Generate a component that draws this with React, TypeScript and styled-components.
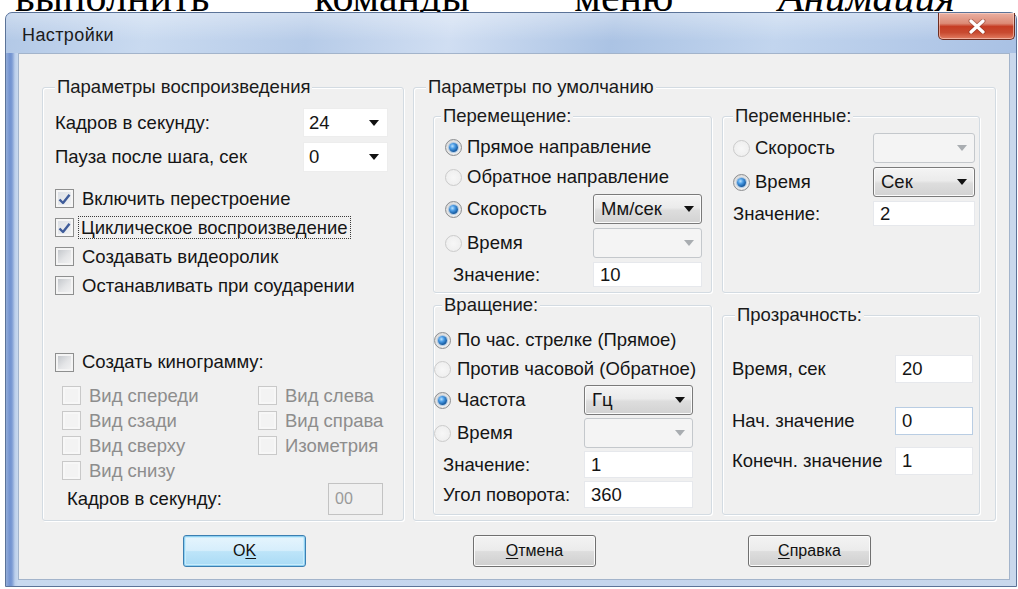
import React from "react";
import styled, { createGlobalStyle, css } from "styled-components";

const GlobalStyle = createGlobalStyle`
  html, body { margin: 0; padding: 0; background: #ffffff; }
  body {
    font-family: "Liberation Sans", Arial, sans-serif;
    font-size: 18.5px;
    line-height: 20px;
    color: #151515;
  }
  * { box-sizing: border-box; }
`;

const Page = styled.div`
  width: 1018px;
  height: 589px;
  overflow: hidden;
  background: #ffffff;
`;

/* clipped line of the document text above the dialog */
const Caption = styled.div`
  height: 12px;
  overflow: hidden;
`;

const CaptionLine = styled.p`
  margin: -25px 0 0;
  padding: 0 63px 0 15px;
  display: flex;
  justify-content: space-between;
  font-family: "Liberation Serif", "Times New Roman", serif;
  font-size: 42px;
  line-height: 44px;
  color: #000;
  em { font-style: italic; }
`;

const Window = styled.div`
  margin: 0 1px 0 5px;
  height: 575px;
  display: flex;
  flex-direction: column;
  border: 1px solid #5b7398;
  border-radius: 7px 7px 0 0;
  background: linear-gradient(90deg, #93acd8 0px, #7192d0 4px, #7d9cd4 6px, #bccfeb 9px, #c8d9ef 12px, #c4d5ed 60%, #c9d8ec 100%);
`;

const TitleBar = styled.div`
  height: 40px;
  display: flex;
  justify-content: space-between;
  align-items: flex-start;
  padding-left: 16px;
  border-radius: 6px 6px 0 0;
  background:
    linear-gradient(180deg, rgba(255, 255, 255, 0.35) 0%, rgba(255, 255, 255, 0) 70%),
    linear-gradient(100deg, #b2c8e6 0%, #c9daf0 14%, #b6cbe8 30%, #d0def2 44%, #abc3e4 60%, #c2d5ee 76%, #a9c1e4 100%);
`;

const Title = styled.span`
  align-self: center;
  padding-top: 4px;
  font-size: 18px;
  letter-spacing: 0.4px;
  color: #1b1b1b;
`;

const CloseButton = styled.div`
  width: 77px;
  height: 27px;
  margin-right: 1px;
  display: grid;
  place-items: center;
  border: 1px solid #6e2d20;
  border-top: none;
  border-radius: 0 0 5px 5px;
  background: linear-gradient(180deg, #eab0a2 0%, #dc8a76 40%, #c63d24 52%, #c84a30 75%, #e27d62 100%);
  box-shadow: inset 0 0 0 1px rgba(255, 220, 210, 0.55);
`;

const Client = styled.div`
  flex: 1;
  margin: 0 6px 6px 12px;
  display: flex;
  flex-direction: column;
  padding: 33px 13px 0 23px;
  background: #f0f0f0;
  border: 1px solid #a3b4cb;
`;

const Groups = styled.div`
  display: grid;
  grid-template-columns: 362px 1fr;
  column-gap: 9px;
  height: 434px;
`;

const GroupBox = styled.div<{ $mt?: number }>`
  display: flex;
  flex-direction: column;
  margin-top: ${(p) => p.$mt ?? 0}px;
  border: 1px solid #d3dbe2;
  border-radius: 3px;
  box-shadow: inset 1px 1px 0 #ffffff, 1px 1px 0 #ffffff;
`;

const GroupTitle = styled.div<{ $ml: number }>`
  align-self: flex-start;
  margin: -11px 0 0 ${(p) => p.$ml}px;
  padding: 0 2px;
  line-height: 20px;
  background: #f0f0f0;
  color: #1a1a1a;
  white-space: nowrap;
`;

/* ---------- left column ---------- */

const PlaybackBody = styled.div`
  display: flex;
  flex-direction: column;
  padding: 0 15px 0 12px;
`;

const FieldRow = styled.div<{ $h: number; $mt?: number; $indent?: number }>`
  display: flex;
  align-items: center;
  justify-content: space-between;
  height: ${(p) => p.$h}px;
  margin-top: ${(p) => p.$mt ?? 0}px;
  padding-left: ${(p) => p.$indent ?? 0}px;
  white-space: nowrap;
`;

const CheckList = styled.div<{ $mt: number }>`
  display: flex;
  flex-direction: column;
  margin-top: ${(p) => p.$mt}px;
`;

const CheckRow = styled.div<{ $h?: number; $disabled?: boolean; $mt?: number }>`
  display: flex;
  align-items: center;
  gap: 8px;
  height: ${(p) => p.$h ?? 29}px;
  margin-top: ${(p) => p.$mt ?? 0}px;
  white-space: nowrap;
  color: ${(p) => (p.$disabled ? "#8d8d8d" : "#151515")};
`;

const FocusText = styled.span`
  padding: 0 2px;
  margin-left: -3px;
  line-height: 21px;
  outline: 1px dotted #3a3a3a;
  outline-offset: 0;
`;

const ViewsGrid = styled.div`
  display: grid;
  grid-template-columns: 196px 1fr;
  grid-auto-rows: 25px;
  margin-top: 7px;
  padding-left: 7px;
`;

const Box = styled.span<{ $checked?: boolean; $disabled?: boolean }>`
  flex: none;
  width: 19px;
  height: 19px;
  display: grid;
  place-items: center;
  border: 1px solid ${(p) => (p.$disabled ? "#c9c9c9" : "#8e8f8f")};
  ${(p) =>
    p.$disabled
      ? css`
          background: #f3f3f3;
          box-shadow: inset 0 0 0 2px #f7f7f7;
        `
      : p.$checked
      ? css`
          background: linear-gradient(135deg, #d9dde3 0%, #f4f5f6 100%);
          box-shadow: inset 0 0 0 2px #f6f6f6;
        `
      : css`
          background: linear-gradient(135deg, #bcc0c5 0%, #e4e5e7 55%, #f5f5f5 100%);
          box-shadow: inset 0 0 0 2px #f4f4f4;
        `}
`;

const RadioDot = styled.span<{ $checked?: boolean; $disabled?: boolean }>`
  flex: none;
  width: 17px;
  height: 17px;
  border-radius: 50%;
  display: grid;
  place-items: center;
  border: 1px solid ${(p) => (p.$disabled ? "#cbcbcb" : "#8c8e90")};
  background: ${(p) =>
    p.$disabled
      ? "radial-gradient(circle at 50% 50%, #f7f7f7 0%, #ececec 100%)"
      : "radial-gradient(circle at 60% 65%, #f6f6f6 0%, #e2e2e2 60%, #cfcfcf 100%)"};
  &::after {
    content: "";
    display: ${(p) => (p.$checked ? "block" : "none")};
    width: 9px;
    height: 9px;
    border-radius: 50%;
    background: radial-gradient(circle at 38% 35%, #b8e2ff 0%, #4a9be4 32%, #155aa0 70%, #0b3d74 100%);
    box-shadow: 0 0 0 1px rgba(120, 170, 220, 0.5);
  }
`;

/* ---------- combo boxes and inputs ---------- */

const Arrow = styled.span<{ $muted?: boolean }>`
  width: 0;
  height: 0;
  border-left: 5px solid transparent;
  border-right: 5px solid transparent;
  border-top: 6px solid ${(p) => (p.$muted ? "#a9adb1" : "#111")};
`;

const EditCombo = styled.div<{ $w: number; $h: number }>`
  width: ${(p) => p.$w}px;
  height: ${(p) => p.$h}px;
  display: flex;
  align-items: center;
  justify-content: space-between;
  padding: 0 8px 0 5px;
  background: #ffffff;
  border: 1px solid #ededed;
`;

const ListCombo = styled.div<{ $disabled?: boolean }>`
  height: 30px;
  display: flex;
  align-items: center;
  justify-content: space-between;
  padding: 0 7px 0 7px;
  border-radius: 3px;
  ${(p) =>
    p.$disabled
      ? css`
          border: 1px solid #c4c8cc;
          background: #f4f4f4;
        `
      : css`
          border: 1px solid #7a7a7a;
          background: linear-gradient(180deg, #f4f4f4 0%, #ebebeb 45%, #dddddd 55%, #d2d2d2 100%);
          box-shadow: inset 0 0 0 1px #fbfbfb;
        `}
`;

const TextBox = styled.div<{ $h?: number; $hover?: boolean }>`
  height: ${(p) => p.$h ?? 25}px;
  display: flex;
  align-items: center;
  padding-left: 6px;
  background: #ffffff;
  border: 1px solid ${(p) => (p.$hover ? "#b9cde3" : "#e6e8ec")};
`;

const DisabledBox = styled.div`
  width: 55px;
  height: 32px;
  margin-right: 5px;
  display: flex;
  align-items: center;
  padding-left: 6px;
  color: #9a9a9a;
  border: 1px solid #c3c3c3;
  background: #f0f0f0;
  font-size: 16px;
`;

/* ---------- right column ---------- */

const DefaultsGrid = styled.div`
  flex: 1;
  display: grid;
  grid-template-columns: 279px 258px;
  grid-template-rows: 177px 1fr;
  column-gap: 10px;
  row-gap: 12px;
  margin-top: 19px;
  padding: 0 0 5px 19px;
`;

const OptionGrid = styled.div<{
  $cols: string;
  $rows: string;
  $gap: number;
  $pad: string;
  $mt: number;
  $align?: string;
}>`
  display: grid;
  grid-template-columns: ${(p) => p.$cols};
  grid-template-rows: ${(p) => p.$rows};
  row-gap: ${(p) => p.$gap}px;
  align-items: ${(p) => p.$align ?? "center"};
  margin-top: ${(p) => p.$mt}px;
  padding: ${(p) => p.$pad};
  white-space: nowrap;
`;

const Option = styled.div<{ $span?: boolean; $gap?: number }>`
  display: flex;
  align-items: center;
  gap: ${(p) => p.$gap ?? 5}px;
  grid-column: ${(p) => (p.$span ? "1 / -1" : "auto")};
`;

const FieldLabel = styled.span<{ $indent?: number }>`
  padding-left: ${(p) => p.$indent ?? 0}px;
  line-height: 28px;
`;

/* ---------- dialog buttons ---------- */

const ButtonRow = styled.div`
  display: grid;
  grid-template-columns: 290px 275px 123px;
  margin-top: 14px;
  padding-left: 141px;
`;

const Button = styled.div<{ $primary?: boolean }>`
  width: 123px;
  height: 32px;
  display: grid;
  place-items: center;
  font-size: 16px;
  color: #111;
  border-radius: 3px;
  ${(p) =>
    p.$primary
      ? css`
          border: 1px solid #3c7fb1;
          background: linear-gradient(180deg, #e6f5fd 0%, #d6eefc 48%, #bde4f9 52%, #a9dbf5 100%);
          box-shadow: inset 0 0 0 1px #8fd0f2, inset 0 0 0 2px #c9ecfb;
        `
      : css`
          border: 1px solid #707070;
          background: linear-gradient(180deg, #f3f3f3 0%, #ebebeb 48%, #dddddd 52%, #cfcfcf 100%);
          box-shadow: inset 0 0 0 1px #fbfbfb;
        `}
  u { text-underline-offset: 2px; }
`;

const Check = () => (
  <svg width="13" height="12" viewBox="0 0 13 12">
    <path d="M1.5 6.5 L5 10 L11.5 1.8" fill="none" stroke="#3f5c9a" strokeWidth="2.4" strokeLinejoin="round" />
  </svg>
);

const CloseGlyph = () => (
  <svg width="18" height="15" viewBox="0 0 18 15">
    <path d="M3 2 L15 13 M15 2 L3 13" stroke="#7a2a1c" strokeWidth="5" strokeLinecap="round" opacity="0.45" />
    <path d="M3 2 L15 13 M15 2 L3 13" stroke="#ffffff" strokeWidth="3.2" strokeLinecap="round" />
  </svg>
);

export default function App() {
  return (
    <>
      <GlobalStyle />
      <Page>
        <Caption>
          <CaptionLine>
            <span>выполнить</span>
            <span>команды</span>
            <span>меню</span>
            <em>Анимация</em>
          </CaptionLine>
        </Caption>

        <Window>
          <TitleBar>
            <Title>Настройки</Title>
            <CloseButton>
              <CloseGlyph />
            </CloseButton>
          </TitleBar>

          <Client>
            <Groups>
              <GroupBox>
                <GroupTitle $ml={12}>Параметры воспроизведения</GroupTitle>
                <PlaybackBody>
                  <FieldRow $h={29} $mt={11}>
                    <span>Кадров в секунду:</span>
                    <EditCombo $w={85} $h={29}>
                      24
                      <Arrow />
                    </EditCombo>
                  </FieldRow>
                  <FieldRow $h={30} $mt={5}>
                    <span>Пауза после шага, сек</span>
                    <EditCombo $w={85} $h={30}>
                      0
                      <Arrow />
                    </EditCombo>
                  </FieldRow>

                  <CheckList $mt={12}>
                    <CheckRow>
                      <Box $checked>
                        <Check />
                      </Box>
                      <span>Включить перестроение</span>
                    </CheckRow>
                    <CheckRow>
                      <Box $checked>
                        <Check />
                      </Box>
                      <FocusText>Циклическое воспроизведение</FocusText>
                    </CheckRow>
                    <CheckRow>
                      <Box />
                      <span>Создавать видеоролик</span>
                    </CheckRow>
                    <CheckRow>
                      <Box />
                      <span>Останавливать при соударении</span>
                    </CheckRow>
                  </CheckList>

                  <CheckRow $h={28} $mt={48}>
                    <Box />
                    <span>Создать кинограмму:</span>
                  </CheckRow>

                  <ViewsGrid>
                    <CheckRow $h={25} $disabled>
                      <Box $disabled />
                      <span>Вид спереди</span>
                    </CheckRow>
                    <CheckRow $h={25} $disabled>
                      <Box $disabled />
                      <span>Вид слева</span>
                    </CheckRow>
                    <CheckRow $h={25} $disabled>
                      <Box $disabled />
                      <span>Вид сзади</span>
                    </CheckRow>
                    <CheckRow $h={25} $disabled>
                      <Box $disabled />
                      <span>Вид справа</span>
                    </CheckRow>
                    <CheckRow $h={25} $disabled>
                      <Box $disabled />
                      <span>Вид сверху</span>
                    </CheckRow>
                    <CheckRow $h={25} $disabled>
                      <Box $disabled />
                      <span>Изометрия</span>
                    </CheckRow>
                    <CheckRow $h={25} $disabled>
                      <Box $disabled />
                      <span>Вид снизу</span>
                    </CheckRow>
                  </ViewsGrid>

                  <FieldRow $h={32} $indent={12}>
                    <span>Кадров в секунду:</span>
                    <DisabledBox>00</DisabledBox>
                  </FieldRow>
                </PlaybackBody>
              </GroupBox>

              <GroupBox>
                <GroupTitle $ml={12}>Параметры по умолчанию</GroupTitle>
                <DefaultsGrid>
                  <GroupBox>
                    <GroupTitle $ml={7}>Перемещение:</GroupTitle>
                    <OptionGrid $cols="148px 109px" $rows="26px 26px 30px 30px 25px" $gap={4} $pad="0 0 0 11px" $mt={8}>
                      <Option $span>
                        <RadioDot $checked />
                        <span>Прямое направление</span>
                      </Option>
                      <Option $span>
                        <RadioDot $disabled />
                        <span>Обратное направление</span>
                      </Option>
                      <Option>
                        <RadioDot $checked />
                        <span>Скорость</span>
                      </Option>
                      <ListCombo>
                        <span>Мм/сек</span>
                        <Arrow />
                      </ListCombo>
                      <Option>
                        <RadioDot $disabled />
                        <span>Время</span>
                      </Option>
                      <ListCombo $disabled>
                        <span />
                        <Arrow $muted />
                      </ListCombo>
                      <FieldLabel $indent={8}>Значение:</FieldLabel>
                      <TextBox>10</TextBox>
                    </OptionGrid>
                  </GroupBox>

                  <GroupBox>
                    <GroupTitle $ml={10}>Переменные:</GroupTitle>
                    <OptionGrid $cols="1fr 102px" $rows="30px 30px 25px" $gap={4} $pad="0 4px 0 10px" $mt={7}>
                      <Option>
                        <RadioDot $disabled />
                        <span>Скорость</span>
                      </Option>
                      <ListCombo $disabled>
                        <span />
                        <Arrow $muted />
                      </ListCombo>
                      <Option>
                        <RadioDot $checked />
                        <span>Время</span>
                      </Option>
                      <ListCombo>
                        <span>Сек</span>
                        <Arrow />
                      </ListCombo>
                      <FieldLabel>Значение:</FieldLabel>
                      <TextBox>2</TextBox>
                    </OptionGrid>
                  </GroupBox>

                  <GroupBox>
                    <GroupTitle $ml={8}>Вращение:</GroupTitle>
                    <OptionGrid $cols="150px 109px" $rows="26px 26px 30px 30px 27px 27px" $gap={3} $pad="0" $mt={12}>
                      <Option $span $gap={6}>
                        <RadioDot $checked />
                        <span>По час. стрелке (Прямое)</span>
                      </Option>
                      <Option $span $gap={6}>
                        <RadioDot $disabled />
                        <span>Против часовой (Обратное)</span>
                      </Option>
                      <Option $gap={6}>
                        <RadioDot $checked />
                        <span>Частота</span>
                      </Option>
                      <ListCombo>
                        <span>Гц</span>
                        <Arrow />
                      </ListCombo>
                      <Option $gap={6}>
                        <RadioDot $disabled />
                        <span>Время</span>
                      </Option>
                      <ListCombo $disabled>
                        <span />
                        <Arrow $muted />
                      </ListCombo>
                      <FieldLabel $indent={9}>Значение:</FieldLabel>
                      <TextBox $h={27}>1</TextBox>
                      <FieldLabel $indent={9}>Угол поворота:</FieldLabel>
                      <TextBox $h={27}>360</TextBox>
                    </OptionGrid>
                  </GroupBox>

                  <GroupBox $mt={10}>
                    <GroupTitle $ml={12}>Прозрачность:</GroupTitle>
                    <OptionGrid $cols="1fr 78px" $rows="28px 52px 40px" $gap={0} $pad="0 6px 0 9px" $mt={30} $align="end">
                      <FieldLabel>Время, сек</FieldLabel>
                      <TextBox $h={28}>20</TextBox>
                      <FieldLabel>Нач. значение</FieldLabel>
                      <TextBox $h={28} $hover>
                        0
                      </TextBox>
                      <FieldLabel>Конечн. значение</FieldLabel>
                      <TextBox $h={28}>1</TextBox>
                    </OptionGrid>
                  </GroupBox>
                </DefaultsGrid>
              </GroupBox>
            </Groups>

            <ButtonRow>
              <Button $primary>
                <span>
                  O<u>K</u>
                </span>
              </Button>
              <Button>
                <span>
                  <u>О</u>тмена
                </span>
              </Button>
              <Button>
                <span>
                  <u>С</u>правка
                </span>
              </Button>
            </ButtonRow>
          </Client>
        </Window>
      </Page>
    </>
  );
}
